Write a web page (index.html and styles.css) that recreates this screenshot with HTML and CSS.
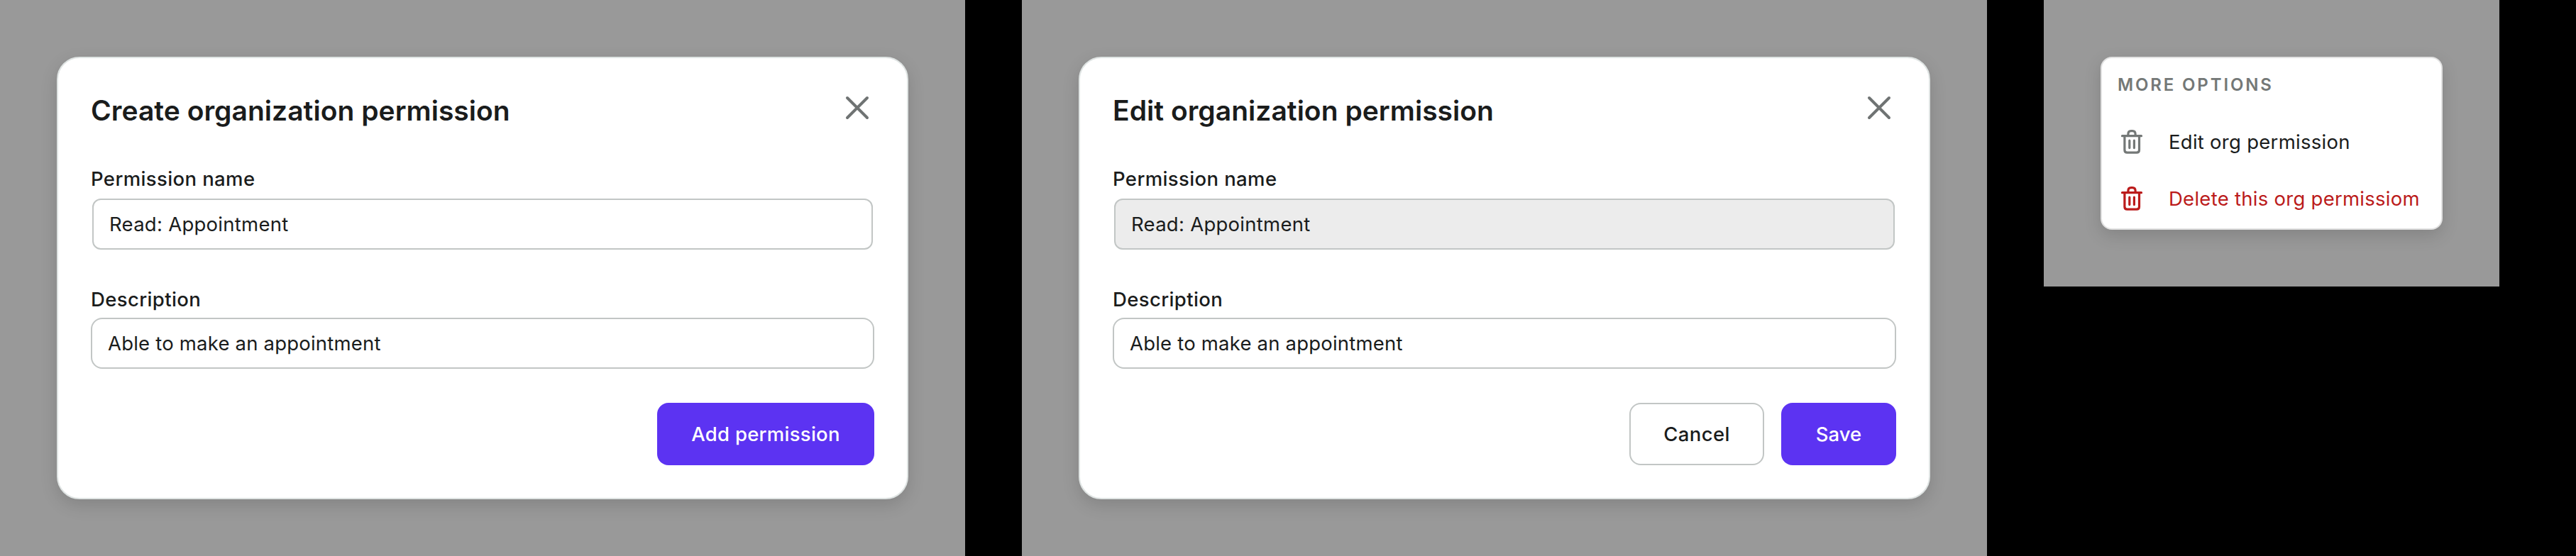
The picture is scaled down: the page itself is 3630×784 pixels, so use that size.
FILE: index.html
```html
<!DOCTYPE html>
<html lang="en">
<head>
<meta charset="utf-8">
<title>Organization permissions</title>
<link rel="stylesheet" href="styles.css">
</head>
<body>
<main class="board">
  <section class="panel">
    <div class="card">
      <header class="card-header">
        <h2 class="card-title">Create organization permission</h2>
        <svg class="close" viewBox="0 0 48 48" aria-label="Close"><path d="M10 10 38 38M38 10 10 38"/></svg>
      </header>
      <div class="field field-name">
        <div class="label">Permission name</div>
        <div class="input input-inset">Read: Appointment</div>
      </div>
      <div class="field">
        <div class="label">Description</div>
        <div class="input input-wide">Able to make an appointment</div>
      </div>
      <footer class="actions">
        <div class="button primary button-add">Add permission</div>
      </footer>
    </div>
  </section>

  <section class="panel">
    <div class="card">
      <header class="card-header">
        <h2 class="card-title">Edit organization permission</h2>
        <svg class="close" viewBox="0 0 48 48" aria-label="Close"><path d="M10 10 38 38M38 10 10 38"/></svg>
      </header>
      <div class="field field-name">
        <div class="label">Permission name</div>
        <div class="input input-inset disabled">Read: Appointment</div>
      </div>
      <div class="field">
        <div class="label">Description</div>
        <div class="input input-wide">Able to make an appointment</div>
      </div>
      <footer class="actions">
        <div class="button secondary button-cancel">Cancel</div>
        <div class="button primary button-save">Save</div>
      </footer>
    </div>
  </section>

  <section class="panel panel-menu">
    <div class="menu">
      <div class="menu-heading">MORE OPTIONS</div>
      <div class="menu-item">
        <svg class="icon" viewBox="0 0 40 40"><path d="M6.5 11.7H33.5M9.9 11.7V31.5Q9.9 35.2 13.6 35.2H26.8Q30.5 35.2 30.5 31.5V11.7M14.9 11.5V9Q14.9 4.6 19 4.6H21Q25.1 4.6 25.1 9V11.5M16.8 18.2V28.6M23.4 18.2V28.6"/></svg>
        <span>Edit org permission</span>
      </div>
      <div class="menu-item danger">
        <svg class="icon" viewBox="0 0 40 40"><path d="M6.5 11.7H33.5M9.9 11.7V31.5Q9.9 35.2 13.6 35.2H26.8Q30.5 35.2 30.5 31.5V11.7M14.9 11.5V9Q14.9 4.6 19 4.6H21Q25.1 4.6 25.1 9V11.5M16.8 18.2V28.6M23.4 18.2V28.6"/></svg>
        <span>Delete this org permissiom</span>
      </div>
    </div>
  </section>
</main>
</body>
</html>
```

FILE: styles.css
```css
* { box-sizing: border-box; }

body {
  margin: 0;
  background: #000;
  color: #1a1c1c;
  font: 400 27.5px/40px Inter, "Liberation Sans", sans-serif;
  letter-spacing: 0.27px;
  overflow: hidden;
}

.board {
  display: flex;
  align-items: flex-start;
  gap: 80px;
  height: 784px;
}

.panel {
  flex: none;
  width: 1360px;
  height: 784px;
  padding: 80px;
  background: #999;
}

.panel-menu {
  width: 642px;
  height: 404px;
}

.card {
  height: 624px;
  padding: 46px;
  background: #fff;
  border: 2px solid #dfe4e3;
  border-radius: 32px;
  box-shadow: 0 8px 24px rgba(0, 0, 0, 0.14);
}

.card-header {
  display: flex;
  justify-content: space-between;
  height: 56px;
  margin-bottom: 48px;
}

.card-title {
  margin: 0;
  font-size: 39px;
  line-height: 56px;
  font-weight: 600;
  letter-spacing: 0.03px;
}

.close {
  width: 48px;
  height: 48px;
  fill: none;
  stroke: #6f7373;
  stroke-width: 4;
  stroke-linecap: round;
}

.field-name { margin-bottom: 50px; }

.label {
  font-weight: 500;
  letter-spacing: 0.38px;
}

.input {
  height: 72px;
  padding: 0 22px;
  border: 2px solid #c2c6c5;
  line-height: 68px;
  background: #fff;
}

.input-inset {
  margin: 8px 2px 0;
  border-radius: 12px;
}

.input-wide {
  margin-top: 6px;
  border-radius: 16px;
  letter-spacing: 0.2px;
}

.disabled { background: #ececec; }

.actions {
  display: flex;
  justify-content: flex-end;
  gap: 24px;
  margin-top: 48px;
}

.button {
  height: 88px;
  border-radius: 16px;
  font-weight: 500;
  line-height: 88px;
  text-align: center;
}

.primary {
  background: #5c33f2;
  color: #fff;
}

.secondary {
  border: 2px solid #c2c6c5;
  line-height: 84px;
  background: #fff;
}

.button-add { width: 306px; }
.button-cancel { width: 190px; letter-spacing: 0.37px; }
.button-save { width: 162px; letter-spacing: 0; }

.menu {
  height: 244px;
  padding: 0 22px;
  background: #fff;
  border: 2px solid #e1e1e1;
  border-radius: 16px;
  box-shadow: 0 8px 24px rgba(0, 0, 0, 0.14);
}

.menu-heading {
  height: 78px;
  color: #747877;
  font-size: 24px;
  line-height: 75px;
  font-weight: 600;
  letter-spacing: 2.85px;
}

.menu-item {
  display: flex;
  align-items: center;
  gap: 32px;
  height: 80px;
  white-space: nowrap;
}

.icon {
  flex: none;
  width: 40px;
  height: 40px;
  fill: none;
  stroke: #747877;
  stroke-width: 3.2;
  stroke-linecap: round;
  stroke-linejoin: round;
}

.danger { color: #bb1b1b; }
.danger .icon { stroke: #bb1b1b; }
```
